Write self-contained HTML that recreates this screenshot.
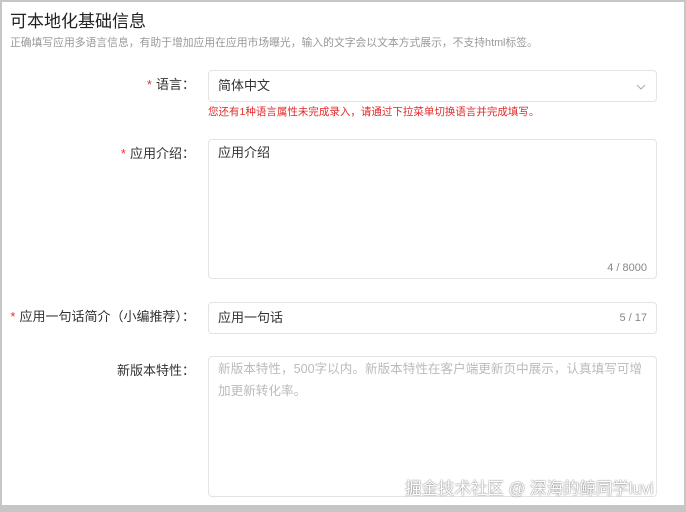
<!DOCTYPE html>
<html><head><meta charset="utf-8"><style>
*{margin:0;padding:0;box-sizing:border-box}
body{width:686px;height:512px;background:#c6c6c6;position:relative;overflow:hidden;font-family:"Liberation Sans","Noto Sans CJK SC",sans-serif;color:#333;line-height:1.2}
.page{position:absolute;left:2px;top:2px;width:682px;height:503px;background:#fff}
.a{position:absolute;white-space:nowrap}
.box{position:absolute;left:208px;width:449px;border:1px solid #e3e3e3;border-radius:4px;background:#fff}
.lbl{position:absolute;right:491px;font-size:13px;color:#333;white-space:nowrap}
.lbl b{color:#e33;font-weight:normal;margin-right:4px}
.cnt{position:absolute;right:9px;font-size:11px;color:#888}
</style></head><body>
<div class="page"></div>
<div class="a" style="left:10px;top:12px;font-size:17px;color:#222">可本地化基础信息</div>
<div class="a" style="left:10px;top:37px;font-size:10.8px;color:#999">正确填写应用多语言信息，有助于增加应用在应用市场曝光，输入的文字会以文本方式展示，不支持html标签。</div>

<div class="lbl" style="top:77px"><b>*</b>语言：</div>
<div class="box" style="top:70px;height:32px"><span class="a" style="left:9px;top:7px;font-size:13px">简体中文</span>
<svg style="position:absolute;right:10px;top:13px" width="10" height="7"><path d="M1 1l4 4 4-4" fill="none" stroke="#aaa" stroke-width="1"/></svg></div>
<div class="a" style="left:208px;top:106px;font-size:10.5px;color:#e02a2a">您还有1种语言属性未完成录入，请通过下拉菜单切换语言并完成填写。</div>

<div class="lbl" style="top:146px"><b>*</b>应用介绍：</div>
<div class="box" style="top:139px;height:140px"><span class="a" style="left:9px;top:5px;font-size:13px">应用介绍</span><span class="cnt" style="bottom:3px">4 / 8000</span></div>

<div class="lbl" style="top:309px"><b>*</b>应用一句话简介（小编推荐）：</div>
<div class="box" style="top:302px;height:32px"><span class="a" style="left:9px;top:7px;font-size:13px">应用一句话</span><span class="cnt" style="top:9px">5 / 17</span></div>

<div class="lbl" style="top:363px">新版本特性：</div>
<div class="box" style="top:356px;height:141px"><div style="position:absolute;left:9px;top:1px;right:2px;font-size:12.6px;line-height:22px;color:#bbb">新版本特性，500字以内。新版本特性在客户端更新页中展示，认真填写可增加更新转化率。</div></div>

<div class="a" style="left:405px;top:480px;font-size:16.5px;color:#fff;text-shadow:0 0 1.5px #444">掘金技术社区 @ 深海的鲸同学luvi</div>
</body></html>
